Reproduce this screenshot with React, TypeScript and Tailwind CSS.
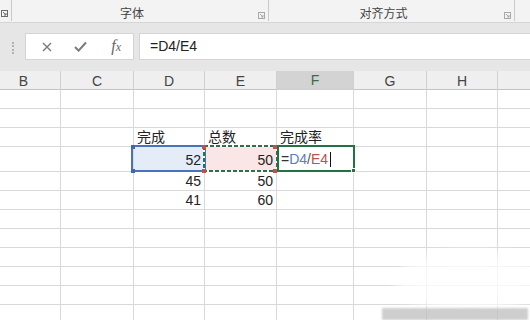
import React from "react";

const colW = [
  "w-[61px]",
  "w-[73px]",
  "w-[71px]",
  "w-[72px]",
  "w-[77px]",
  "w-[73px]",
  "w-[71px]",
  "flex-1",
];
const colLabels = ["B", "C", "D", "E", "F", "G", "H", ""];

type Cell = { text?: React.ReactNode; align?: "left" | "right"; cjk?: boolean };

const rowH = [
  "h-[19px]",
  "h-[19px]",
  "h-[19px]",
  "h-[25px]",
  "h-[19px]",
  "h-[19px]",
  "h-[19px]",
  "h-[19px]",
  "h-[19px]",
  "h-[19px]",
  "h-[19px]",
  "h-[19px]",
];

const data: Record<string, Cell> = {
  "2-2": { text: "完成", cjk: true },
  "2-3": { text: "总数", cjk: true },
  "2-4": { text: "完成率", cjk: true },
  "3-2": { text: "52", align: "right" },
  "3-3": { text: "50", align: "right" },
  "4-2": { text: "45", align: "right" },
  "4-3": { text: "50", align: "right" },
  "5-2": { text: "41", align: "right" },
  "5-3": { text: "60", align: "right" },
};

function Launcher({ dark }: { dark?: boolean }) {
  const c = dark ? "#6b6b6b" : "#a8a8a8";
  return (
    <svg width="7" height="7" viewBox="0 0 7 7">
      <rect x="0.5" y="0.5" width="6" height="6" fill="none" stroke={c} strokeWidth="1" />
      <path d="M2 2 L5 5 M5 3 L5 5 L3 5" fill="none" stroke={c} strokeWidth="1" />
    </svg>
  );
}

export default function App() {
  const font = { fontFamily: '"Liberation Sans", "Noto Sans CJK SC", sans-serif' };
  return (
    <div
      className="relative w-[530px] h-[320px] overflow-hidden bg-white"
      style={font}
    >
      {/* Ribbon */}
      <div className="flex h-[23px] bg-[#f3f3f3] border-b border-[#d6d6d6] text-[12px] text-[#444]">
        <div className="relative w-[12px] h-[21px] border-r border-[#c9c9c9]">
          <div className="absolute left-[1px] top-[10px]">
            <Launcher dark />
          </div>
        </div>
        <div className="relative w-[257px] h-[21px] border-r border-[#c9c9c9] flex items-center justify-center pr-[16px] pt-[4px]" style={{ fontFamily: '"Noto Sans CJK SC", sans-serif' }}>
          字体
          <div className="absolute right-[3px] top-[12px]">
            <Launcher />
          </div>
        </div>
        <div className="relative w-[246px] h-[21px] border-r border-[#c9c9c9] flex items-center justify-center pr-[16px] pt-[4px]" style={{ fontFamily: '"Noto Sans CJK SC", sans-serif' }}>
          对齐方式
          <div className="absolute right-[3px] top-[12px]">
            <Launcher />
          </div>
        </div>
        <div className="flex-1" />
      </div>

      {/* Formula bar area */}
      <div className="h-[48px] bg-[#e6e6e6] pt-[10px]">
        <div className="flex h-[27px]">
          <div className="w-[25px] flex items-center justify-center">
            <div className="h-[12px] border-l-2 border-dotted border-[#b4b4b4] mt-[2px]" />
          </div>
          <div className="w-[109px] bg-white border border-[#d4d4d4] flex items-center text-[#7a7a7a]">
            <div className="w-[40px] flex justify-center pl-[2px]">
              <svg width="10" height="10" viewBox="0 0 10 10">
                <path d="M1 1 L9 9 M9 1 L1 9" stroke="#7a7a7a" strokeWidth="1.4" />
              </svg>
            </div>
            <div className="w-[30px] flex justify-center">
              <svg width="13" height="11" viewBox="0 0 13 11">
                <path d="M1 6 L4.6 9.6 L12 1.5" fill="none" stroke="#7a7a7a" strokeWidth="2" />
              </svg>
            </div>
            <div className="w-[38px] flex justify-center pl-[4px]">
              <span
                className="italic text-[16px] leading-[16px] text-[#666]"
                style={{ fontFamily: '"Liberation Serif", serif' }}
              >
                f<span className="text-[12px]">x</span>
              </span>
            </div>
          </div>
          <div className="w-[5px]" />
          <div className="flex-1 bg-white border-y border-l border-[#d4d4d4] flex items-center pl-[10px] text-[14px] text-[#222]">
            =D4/E4
          </div>
        </div>
      </div>

      {/* Grid */}
      <div className="relative">
        {/* Header row */}
        <div className="flex h-[19px] bg-[#efefef] border-b border-[#c4c4c4] text-[14px] text-[#444]">
          {colLabels.map((l, i) => (
            <div
              key={i}
              className={`${colW[i]} ${i === 4 ? "bg-[#d3d3d3] text-[#3d6a4b] border-b-2 border-[#217346] -mb-[1px]" : ""} ${i < 7 ? "border-r border-[#d0d0d0]" : ""} ${i === 0 ? "pr-[13px]" : ""} flex items-center justify-center h-[19px] pt-[1px]`}
            >
              {l}
            </div>
          ))}
        </div>
        {rowH.map((h, r) => (
          <div key={r} className={`flex ${h} border-b border-[#d9d9d9]`}>
            {colW.map((w, c) => {
              const cell = data[`${r}-${c}`];
              let bg = "";
              if (r === 3 && c === 2) bg = "bg-[#e4ecf8]";
              if (r === 3 && c === 3) bg = "bg-[#fae6e6]";
              return (
                <div
                  key={c}
                  className={`${w} ${bg} ${c < 7 ? "border-r border-[#d9d9d9]" : ""} flex items-end ${cell?.align === "right" ? "justify-end pr-[3px]" : "justify-start pl-[3px]"} ${r === 3 ? "pb-[3px]" : "pb-[1px]"} text-[14px] leading-[16px] text-[#222]`}
                  style={cell?.cjk ? { fontFamily: '"Noto Sans CJK SC", sans-serif', lineHeight: "17px" } : undefined}
                >
                  {cell?.text}
                </div>
              );
            })}
          </div>
        ))}

        {/* D4 blue selection */}
        <div className="absolute left-[131px] top-[74px] w-[75px] h-[27px] border-2 border-[#4a72b8]" />
        <div className="absolute left-[131px] top-[74px] w-[4px] h-[4px] bg-[#3f68b0]" />
        <div className="absolute left-[131px] top-[98px] w-[4px] h-[4px] bg-[#3f68b0]" />

        {/* E4 dashed reference border */}
        <svg className="absolute left-[203px] top-[74px]" width="75" height="27" viewBox="0 0 75 27">
          <rect x="1" y="1" width="73" height="25" fill="none" stroke="#ffffff" strokeWidth="2" />
          <rect x="1" y="1" width="73" height="25" fill="none" stroke="#2f7049" strokeWidth="2" strokeDasharray="4 2" />
        </svg>
        <div className="absolute left-[202px] top-[74px] w-[4px] h-[4px] bg-[#c0504d]" />
        <div className="absolute left-[202px] top-[98px] w-[4px] h-[4px] bg-[#c0504d]" />
        <div className="absolute left-[273px] top-[74px] w-[4px] h-[4px] bg-[#c0504d]" />
        <div className="absolute left-[273px] top-[98px] w-[4px] h-[4px] bg-[#c0504d]" />

        {/* F4 active cell */}
        <div className="absolute left-[277px] top-[74px] w-[78px] h-[27px] border-2 border-[#217346] flex items-end pb-[3px] pl-[2px] text-[14px] leading-[16px]">
          <span className="text-[#333]">=</span>
          <span className="text-[#5b7cc4]">D4</span>
          <span className="text-[#555]">/</span>
          <span className="text-[#c0504d]">E4</span>
          <span className="ml-[2px] w-[1px] h-[15px] bg-[#111]" />
        </div>
        <div className="absolute left-[351px] top-[97px] w-[5px] h-[5px] bg-[#217346] border border-white" />

        {/* faint watermark */}
        <div className="absolute left-[395px] top-[180px] w-[150px] h-[60px] rounded-[50%] bg-white/75 blur-[6px]" />
        <div className="absolute left-[382px] top-[237px] w-[146px] h-[12px] bg-[#c2c2c2]/80 blur-[1px]" />
      </div>
    </div>
  );
}
